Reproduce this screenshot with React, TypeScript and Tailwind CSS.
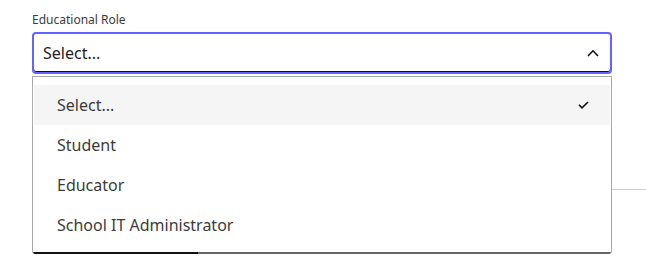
import React from "react";

const font = { fontFamily: '"Noto Sans", "Open Sans", sans-serif' };

export default function App() {
  const options = ["Select...", "Student", "Educator", "School IT Administrator"];
  return (
    <div className="relative w-[646px] h-[270px] bg-white overflow-hidden" style={font}>
      <div className="pl-[32px] pr-[34px] pt-[12px]">
        <div className="text-[12px] leading-[16px] text-[#3c3c3c]">Educational Role</div>
        <div className="mt-[4px] h-[42px] w-[580px] rounded-[4px] border-2 border-[#6363ff] shadow-[inset_0_-1px_0_#111] flex items-center justify-between pl-[9px] pr-[11px]">
          <span className="text-[16px] text-[#222]">Select...</span>
          <svg width="12" height="8" viewBox="0 0 12 8" fill="none">
            <path d="M1 7 L6 1.8 L11 7" stroke="#111" strokeWidth="1.6" />
          </svg>
        </div>
        <div className="mt-[115px] h-px bg-[#d0d0d0] ml-[0px] mr-[-34px]" />
      </div>
      <div className="absolute left-[32px] top-[76px] w-[580px] bg-white border border-b-0 border-[#aaaaaa] rounded-b-[3px] overflow-hidden">
        <div className="pt-[8px] pb-[7px] pl-px pr-px">
          {options.map((o, i) => (
            <div
              key={o}
              className={`h-[40px] flex items-center justify-between pl-[23px] pr-[21px] text-[16px] text-[#3c3c3c] ${i === 0 ? "bg-[#f5f5f5]" : ""}`}
            >
              <span>{o}</span>
              {i === 0 && (
                <svg width="11" height="8" viewBox="0 0 11 8" fill="none">
                  <path d="M1 3.8 L4 6.8 L10 1" stroke="#111" strokeWidth="1.6" />
                </svg>
              )}
            </div>
          ))}
        </div>
        <div className="flex h-[2px]">
          <div className="w-[165px] bg-[#111]" />
          <div className="flex-1 bg-[#666]" />
        </div>
      </div>
    </div>
  );
}
